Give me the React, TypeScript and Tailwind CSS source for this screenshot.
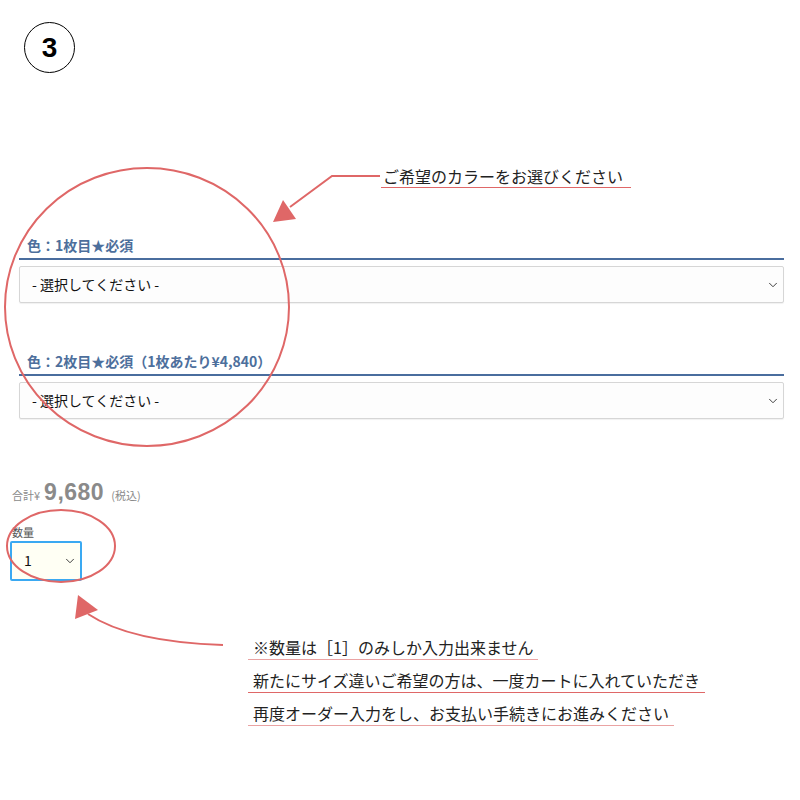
import { ChevronDown } from "lucide-react";

const RED = "#df6767";

function SelectBox({ label }: { label: string }) {
  return (
    <div className="mt-[6px] flex h-[37px] items-center justify-between rounded-[2px] border border-[#d6d6d6] bg-[#fdfdfd] pl-[12px] pr-[3px] shadow-[0_1px_1px_rgba(0,0,0,0.06)]">
      <span className="text-[14px] text-[#111]">{label}</span>
      <ChevronDown className="h-[14px] w-[14px] text-[#333]" strokeWidth={1.6} />
    </div>
  );
}

function FieldLabel({ children }: { children: React.ReactNode }) {
  return (
    <div className="border-b-2 border-[#4a6d9e] pb-[4px] pl-[8px] text-[14px] font-bold leading-[18px] text-[#4d6f9c]">
      {children}
    </div>
  );
}

function Note({ text, line }: { text: string; line: string }) {
  return (
    <div className={`w-fit border-b pb-[1px] pl-[5px] pr-[5px] text-[16px] leading-[22px] text-[#222] ${line}`}>
      {text}
    </div>
  );
}

export default function App() {
  return (
    <div
      className="relative h-[800px] w-[800px] overflow-hidden bg-white"
      style={{ fontFamily: '"Noto Sans CJK JP", "Noto Sans", sans-serif' }}
    >
      {/* 番号 */}
      <div className="ml-[24px] mt-[22px] flex h-[51px] w-[51px] items-center justify-center rounded-full border border-black">
        <span className="text-[28px] font-bold leading-none text-black" style={{ fontFamily: '"Liberation Sans", Arial, sans-serif' }}>
          3
        </span>
      </div>

      {/* 注記：カラー */}
      <div className="ml-[381px] mt-[92px] w-fit border-b border-[#df6767] pl-[2px] pr-[8px] text-[16px] leading-[22px] text-[#222]">
        ご希望のカラーをお選びください
      </div>

      {/* カラー選択 */}
      <div className="pl-[19px] pr-[16px]">
        <div className="mt-[48px]">
          <FieldLabel>色：1枚目★必須</FieldLabel>
          <SelectBox label="- 選択してください -" />
        </div>
        <div className="mt-[49px]">
          <FieldLabel>色：2枚目★必須（1枚あたり¥4,840）</FieldLabel>
          <SelectBox label="- 選択してください -" />
        </div>
      </div>

      {/* 合計 */}
      <div className="ml-[12px] mt-[62px] flex items-baseline text-[#8a8a8a]">
        <span className="text-[11px]">合計¥</span>
        <span
          className="ml-[4px] text-[23px] font-bold leading-[22px] tracking-[0.5px]"
          style={{ fontFamily: '"Liberation Sans", Arial, sans-serif' }}
        >
          9,680
        </span>
        <span className="ml-[7px] text-[11px]">(税込)</span>
      </div>

      {/* 数量 */}
      <div className="ml-[12px] mt-[21px] text-[11px] leading-[14px] text-[#555]">数量</div>
      <div className="ml-[10px] mt-[2px] flex h-[40px] w-[72px] items-center justify-between rounded-[2px] border-2 border-[#3aa9f2] bg-[#fffff4] pl-[12px] pr-[3px]">
        <span className="text-[14px] text-[#111]">1</span>
        <ChevronDown className="h-[14px] w-[14px] text-[#333]" strokeWidth={1.6} />
      </div>

      {/* 注記：数量 */}
      <div className="ml-[248px] mt-[55px] flex flex-col gap-[9px]">
        <Note text="※数量は［1］のみしか入力出来ません" line="border-[#eaa3a3]" />
        <Note text="新たにサイズ違いご希望の方は、一度カートに入れていただき" line="border-[#df6767]" />
        <Note text="再度オーダー入力をし、お支払い手続きにお進みください" line="border-[#eaa3a3]" />
      </div>

      {/* 赤い丸と矢印 */}
      <svg className="pointer-events-none absolute left-0 top-0" width="800" height="800" viewBox="0 0 800 800">
        <ellipse cx="147" cy="307" rx="142" ry="139" fill="none" stroke={RED} strokeWidth="2" />
        <polyline points="380,176 332,176 290,207" fill="none" stroke={RED} strokeWidth="2" />
        <polygon points="273,222 296,219 283,200" fill={RED} />
        <ellipse cx="61" cy="546" rx="54" ry="36" fill="none" stroke={RED} strokeWidth="2" />
        <path d="M223 645 Q130 642 88 614" fill="none" stroke={RED} strokeWidth="2" />
        <polygon points="78,595 75,619 98,610" fill={RED} />
      </svg>
    </div>
  );
}
